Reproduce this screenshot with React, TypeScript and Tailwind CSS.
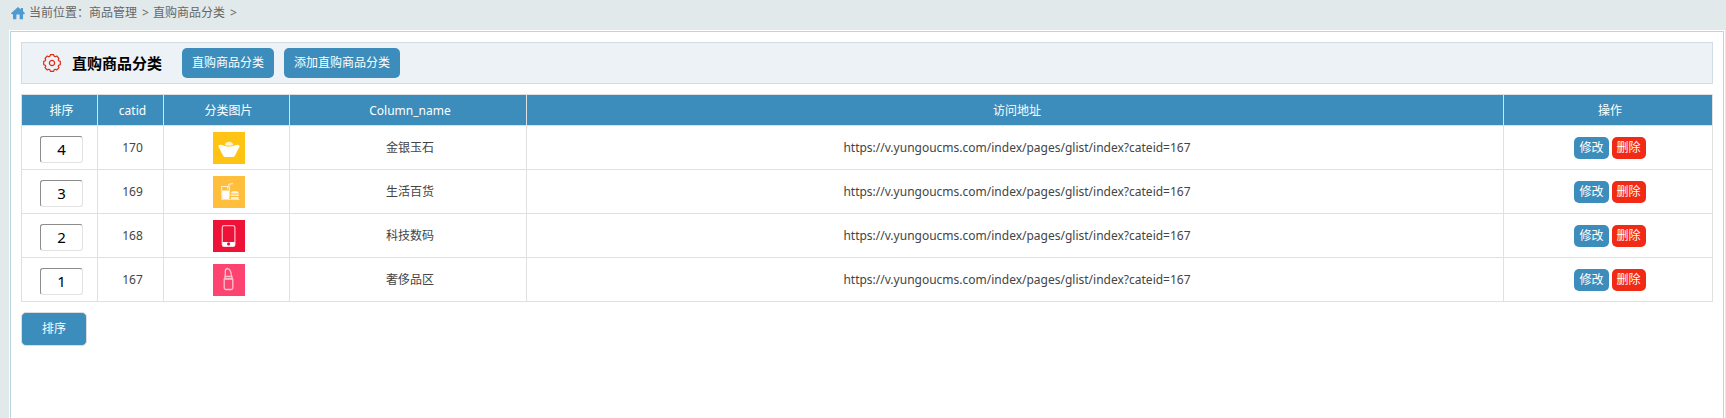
import type { ReactNode } from "react";

type Category = {
  order: number;
  catid: number;
  name: string;
  url: string;
  icon: ReactNode;
};

const CATEGORY_URL =
  "https://v.yungoucms.com/index/pages/glist/index?cateid=167";

const categories: Category[] = [
  { order: 4, catid: 170, name: "金银玉石", url: CATEGORY_URL, icon: <IngotIcon /> },
  { order: 3, catid: 169, name: "生活百货", url: CATEGORY_URL, icon: <GroceryIcon /> },
  { order: 2, catid: 168, name: "科技数码", url: CATEGORY_URL, icon: <PhoneIcon /> },
  { order: 1, catid: 167, name: "奢侈品区", url: CATEGORY_URL, icon: <LipstickIcon /> },
];

export default function App() {
  return (
    <div className="flex min-h-screen flex-col bg-[#e2e9eb] font-['Noto_Sans','Noto_Sans_CJK_SC',sans-serif] text-xs text-[#444]">
      <Breadcrumb />
      <main className="mr-px ml-[9px] flex flex-1 flex-col border border-b-0 border-white">
        <div className="flex-1 border border-b-0 border-[#b9d6dc] bg-white p-2.5">
          <TitleBar />
          <CategoryTable />
          <button
            type="submit"
            className="mt-2.5 h-[34px] rounded-[5px] border border-[#dddddd] bg-[#3c8dbc] px-5 text-white"
          >
            排序
          </button>
        </div>
      </main>
    </div>
  );
}

function Breadcrumb() {
  return (
    <nav className="flex h-[30px] items-center pb-1 pl-[11px] text-[#666]">
      <HomeIcon />
      <span className="ml-1">当前位置：</span>
      <a href="#goods">商品管理</a>
      <span className="mr-1 ml-[5px]">&gt;</span>
      <a href="#category">直购商品分类</a>
      <span className="mr-1 ml-[5px]">&gt;</span>
    </nav>
  );
}

function TitleBar() {
  return (
    <header className="flex h-[42px] items-center border border-[#d0dde6] bg-[#edf2f7] pl-[21px]">
      <GearIcon />
      <h1 className="mr-5 ml-[11px] text-[15px] font-bold text-black">
        直购商品分类
      </h1>
      <div className="flex gap-2.5 text-white">
        <a
          href="#list"
          className="rounded-[5px] bg-[#3c8dbc] px-2.5 leading-[30px]"
        >
          直购商品分类
        </a>
        <a
          href="#add"
          className="rounded-[5px] bg-[#3c8dbc] px-2.5 leading-[30px]"
        >
          添加直购商品分类
        </a>
      </div>
    </header>
  );
}

function CategoryTable() {
  return (
    <table className="mt-2.5 w-full table-fixed border-collapse text-center">
      <colgroup>
        <col className="w-[76px]" />
        <col className="w-[66px]" />
        <col className="w-[126px]" />
        <col className="w-[237px]" />
        <col />
        <col className="w-[209px]" />
      </colgroup>
      <thead>
        <tr className="h-[31px] bg-[#3c8dbc] text-white *:border *:border-[#e0e0e0] *:p-0 *:pt-0.5 *:pl-1 *:font-normal">
          <th>排序</th>
          <th>catid</th>
          <th>分类图片</th>
          <th>Column_name</th>
          <th>访问地址</th>
          <th>操作</th>
        </tr>
      </thead>
      <tbody>
        {categories.map((category) => (
          <tr
            key={category.catid}
            className="h-11 *:border *:border-[#e0e0e0] *:p-0 *:pl-1"
          >
            <td>
              <input
                type="text"
                aria-label={`${category.name} 排序`}
                defaultValue={category.order}
                className="mx-auto mt-[3px] block h-[27px] w-[43px] rounded-[3px] border border-t-[#8c8c8c] border-r-[#e3e3e3] border-b-[#e3e3e3] border-l-[#8c8c8c] text-center text-[15px] text-black"
              />
            </td>
            <td>{category.catid}</td>
            <td>
              <div className="flex justify-center">{category.icon}</div>
            </td>
            <td>{category.name}</td>
            <td>{category.url}</td>
            <td>
              <div className="flex justify-center gap-[3px] text-white">
                <a
                  href="#edit"
                  className="rounded-[5px] bg-[#3c8dbc] px-[5px] leading-[22px]"
                >
                  修改
                </a>
                <a
                  href="#delete"
                  className="rounded-[5px] bg-[#f12a15] px-[5px] leading-[22px]"
                >
                  删除
                </a>
              </div>
            </td>
          </tr>
        ))}
      </tbody>
    </table>
  );
}

function HomeIcon() {
  return (
    <svg viewBox="0 0 14 13" className="h-[13px] w-3.5" fill="#4d9bd0">
      <path d="M7 0 0 6.2 0.8 7.2H2V12.2H5.4V7.5H8.6V12.2H12V7.2H13.2L14 6.2 12 4.3V1H9.8V2.5Z" />
    </svg>
  );
}

function GearIcon() {
  return (
    <svg
      viewBox="-9 -9 18 18"
      className="size-[18px]"
      fill="none"
      stroke="#dd2a14"
      strokeWidth="1.2"
      strokeLinejoin="round"
    >
      <path d="M8.3 -1.6V1.6L6.7 2.2 6.3 3.200 7 4.700 4.700 7 3.200 6.300 2.200 6.700 1.600 8.300H-1.600L-2.200 6.700 -3.200 6.300 -4.700 7 -7 4.700 -6.300 3.200 -6.700 2.200 -8.300 1.600V-1.600L-6.700 -2.200 -6.300 -3.200 -7 -4.700 -4.700 -7 -3.200 -6.300 -2.200 -6.700 -1.600 -8.300H1.600L2.200 -6.700 3.200 -6.300 4.700 -7 7 -4.700 6.300 -3.200 6.700 -2.200Z" />
      <circle r="2.6" />
    </svg>
  );
}

function IngotIcon() {
  return (
    <svg viewBox="0 0 32 32" className="size-8 bg-[#ffc313]">
      <path
        d="M11.7 13C12.5 10.9 14 9.8 16 9.8S19.5 10.9 20.3 13C18 14 14 14 11.7 13Z"
        fill="#fff4cf"
      />
      <path
        d="M5.5 13.4C6.5 12.6 8.5 12.7 10.5 13.5 13.5 14.9 18.5 14.9 21.5 13.5 23.5 12.7 25.5 12.6 26.5 13.4 27 14.5 25.5 16.5 24.5 18.5 23.5 20.5 22.8 22.5 21.5 24.2 20.9 24.9 20 25 19 25H13C12 25 11.1 24.9 10.5 24.2 9.2 22.5 8.5 20.5 7.5 18.5 6.5 16.5 5 14.5 5.5 13.4Z"
        fill="#fff"
      />
    </svg>
  );
}

function GroceryIcon() {
  return (
    <svg viewBox="0 0 32 32" className="size-8 bg-[#ffbe3c]" fill="none">
      <path d="M8.5 10.5H16.5L16 23H9Z" stroke="#fff0d0" />
      <path d="M9 14.5H16.2L15.8 23H9.4Z" fill="#fff" />
      <path d="M14.5 13 15.8 8.5 20 7.3" stroke="#ffe9bd" strokeWidth="1.2" />
      <path
        d="M18 17.5C18 15.7 19.5 15 21.8 15S25.6 15.7 25.6 17.5Z"
        fill="#fff4dc"
      />
      <path d="M17.5 18.5H26V20H17.5ZM18 21H25.6V23.5H18Z" fill="#fff0d0" />
      <path d="M8 23.5H26.5" stroke="#ffe3a8" />
    </svg>
  );
}

function PhoneIcon() {
  return (
    <svg viewBox="0 0 32 32" className="size-8 bg-[#ee1238]">
      <rect
        x="9.3"
        y="5.7"
        width="12.6"
        height="20.6"
        rx="1.8"
        fill="none"
        stroke="#ffb5c0"
        strokeWidth="1.3"
      />
      <path d="M9.3 22H21.9V25.2A1.2 1.2 0 0 1 20.7 26.4H10.5A1.2 1.2 0 0 1 9.3 25.2Z" fill="#fff" />
      <circle cx="15.6" cy="23.9" r="1.6" fill="#ee1238" />
    </svg>
  );
}

function LipstickIcon() {
  return (
    <svg
      viewBox="0 0 32 32"
      className="size-8 bg-[#fd4470]"
      fill="none"
      stroke="#ffc3d0"
      strokeWidth="1.3"
      strokeLinejoin="round"
    >
      <path d="M12.3 12.5V7.5C12.3 5.5 13.5 4.5 14.8 4.5 17.2 5.5 18.3 8.5 18.5 12.5" />
      <path d="M12 12.5H19V14.8H12Z" />
      <path d="M11.2 14.8H19.8V24A1.5 1.5 0 0 1 18.3 25.5H12.7A1.5 1.5 0 0 1 11.2 24Z" />
    </svg>
  );
}
